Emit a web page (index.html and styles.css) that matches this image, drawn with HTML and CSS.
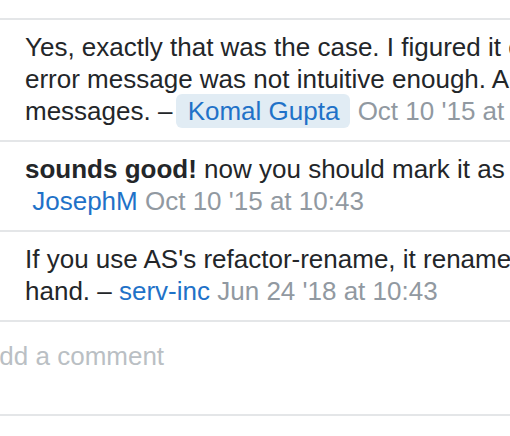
FILE: index.html
```html
<!DOCTYPE html>
<html lang="en">
<head>
<meta charset="utf-8">
<title>Comments</title>
<link rel="stylesheet" href="styles.css">
</head>
<body>
<div class="comments">
  <div class="comment">
    <span class="copy">Yes, exactly that was the case. I figured it out after a while, the<br>error message was not intuitive enough. Anyway thanks for the<br>messages.</span> – <a class="user owner" href="#">Komal Gupta</a> <span class="date">Oct 10 '15 at 10:43</span>
  </div>
  <div class="comment">
    <span class="copy"><b>sounds good!</b> now you should mark it as accepted</span> –<br>&nbsp;<a class="user" href="#">JosephM</a> <span class="date">Oct 10 '15 at 10:43</span>
  </div>
  <div class="comment">
    <span class="copy">If you use AS's refactor-rename, it renames the file too, no need to do it by<br>hand.</span> – <a class="user" href="#">serv-inc</a> <span class="date">Jun 24 '18 at 10:43</span>
  </div>
  <div class="add-comment">
    <span class="placeholder">Add a comment</span>
  </div>
</div>
</body>
</html>
```
FILE: styles.css
```css
html, body {
  margin: 0;
  padding: 0;
  background: #ffffff;
  overflow: hidden;
}
body {
  font-family: "Liberation Sans", Arial, sans-serif;
  font-size: 26px;
  line-height: 32px;
  color: #232629;
}
.comments {
  width: 900px;
  padding-top: 18px;
}
.comment {
  border-top: 2px solid #e4e6e8;
  padding: 11px 0 13px 25px;
  white-space: nowrap;
}
.copy b {
  font-weight: bold;
}
.user {
  color: #1f72c8;
  text-decoration: none;
}
.user.owner {
  background: #e1ecf4;
  border-radius: 6px;
  padding: 2px 11px 2px 12px;
  margin-left: -4px;
}
.date {
  color: #9199a1;
}
.add-comment {
  border-top: 2px solid #e4e6e8;
  border-bottom: 2px solid #e4e6e8;
  height: 96px;
  box-sizing: border-box;
  padding-top: 18px;
  margin-left: -18px;
}
.placeholder {
  color: #babfc4;
}
```
